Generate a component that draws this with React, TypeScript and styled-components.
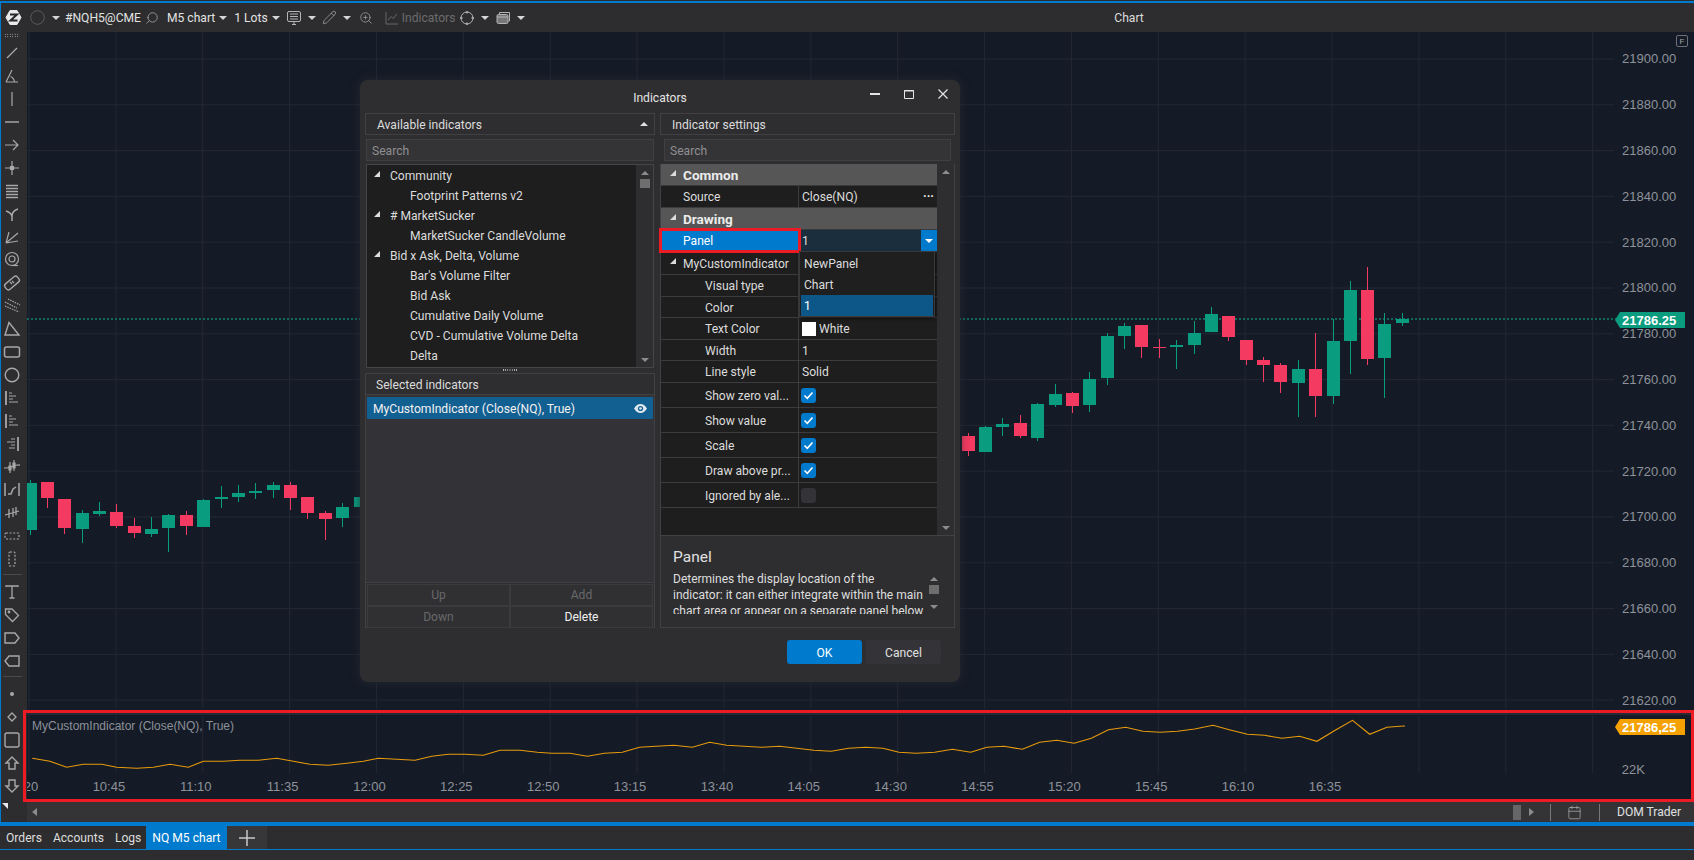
import React from 'react';
import styled, { createGlobalStyle } from 'styled-components';
import { Search, Pencil, ZoomIn, Calendar } from 'lucide-react';

const UI_FONT = 'Roboto, "Open Sans", sans-serif';
const CHART_FONT = '"Liberation Sans", Arial, sans-serif';
const UI_SIZE = '12.1px';

const GlobalStyle = createGlobalStyle`
  html, body { margin: 0; padding: 0; background: #2d2d2f; }
  body { width: 1694px; height: 860px; overflow: hidden; font-family: ${UI_FONT}; }
  * { box-sizing: border-box; }
`;

const Page = styled.div`
  display: flex;
  flex-direction: column;
  width: 1694px;
  height: 860px;
  background: #2d2d2f;
  color: #dcdcdc;
  font-size: ${UI_SIZE};
`;

const Frame = styled.div`
  display: flex;
  flex-direction: column;
  height: 825px;
  margin-top: 1px;
  border-top: 2px solid #007acc;
  border-bottom: 4px solid #007acc;
  border-left: 1px solid #007acc;
`;

/* top toolbar */
const Toolbar = styled.div`
  display: flex;
  align-items: center;
  flex: none;
  height: 29px;
  padding-left: 4px;
`;

const ToolGroup = styled.div`
  display: flex;
  align-items: center;
  width: 559px;
  flex: none;
`;

const ToolText = styled.span<{ $dim?: boolean; $ml?: number }>`
  font-size: ${UI_SIZE};
  white-space: nowrap;
  margin-left: ${p => p.$ml ?? 6}px;
  color: ${p => (p.$dim ? '#6b6b6d' : '#e2e2e2')};
`;

const ToolIcon = styled.span<{ $ml?: number }>`
  display: inline-flex;
  flex: none;
  margin-left: ${p => p.$ml ?? 6}px;
  color: #b5b5b5;
`;

const Caret = styled.span<{ $ml?: number }>`
  flex: none;
  width: 0;
  height: 0;
  margin-left: ${p => p.$ml ?? 7}px;
  border-left: 4px solid transparent;
  border-right: 4px solid transparent;
  border-top: 4px solid #d5d5d5;
`;

const WindowTitle = styled.div`
  flex: 1;
  text-align: center;
  font-size: ${UI_SIZE};
  color: #dcdcdc;
`;

/* work area */
const Body = styled.div`
  display: flex;
  flex: 1;
  min-height: 0;
`;

const SideTools = styled.div`
  position: relative;
  display: flex;
  flex-direction: column;
  align-items: center;
  flex: none;
  width: 26px;
  padding-right: 4px;
  color: #a8a8a8;
`;

const Grip = styled.div`
  width: 16px;
  height: 5px;
  margin: 1px 0 3px;
  background-image: radial-gradient(circle, #cfcfcf 0.6px, transparent 0.8px);
  background-size: 2.5px 2.5px;
`;

const ToolRow = styled.div`
  display: flex;
  align-items: center;
  justify-content: center;
  flex: none;
  height: 23px;
`;

const ToolSep = styled.div`
  flex: none;
  width: 19px;
  height: 1px;
  margin: 4px 0 5px;
  background: #4a4a4c;
`;

const CornerMark = styled.div`
  position: absolute;
  left: 1px;
  bottom: 13px;
  width: 0;
  height: 0;
  border-top: 6px solid #e8e8e8;
  border-left: 6px solid transparent;
`;

const Main = styled.div`
  display: flex;
  flex-direction: column;
  flex: 1;
  min-width: 0;
`;

const ChartArea = styled.div`
  position: relative;
  display: flex;
  flex: 1;
  min-height: 0;
  background: #151b26;
`;

const PriceAxis = styled.div`
  flex: none;
  width: 76px;
  padding: 4px 0 0 4px;
  font-family: ${CHART_FONT};
  font-size: 13px;
  color: #8e929a;
`;

const PriceLabel = styled.div`
  display: flex;
  align-items: center;
  height: 45.8px;
`;

const FloatBox = styled.div`
  position: absolute;
  top: 3px;
  right: 6px;
  display: flex;
  align-items: center;
  justify-content: center;
  width: 12px;
  height: 12px;
  border: 1px solid #6d7078;
  border-radius: 2px;
  font-family: ${CHART_FONT};
  font-size: 8px;
  color: #a4a7ad;
`;

const PriceTag = styled.div<{ $color: string; $top: number }>`
  position: absolute;
  top: ${p => p.$top}px;
  right: 9px;
  display: flex;
  align-items: center;
  width: 65px;
  height: 16px;
  padding-left: 2px;
  font-family: ${CHART_FONT};
  font-size: 13px;
  font-weight: 700;
  color: #ffffff;
  background: ${p => p.$color};
  &::before {
    content: '';
    position: absolute;
    left: -5px;
    top: 0;
    border-top: 8px solid transparent;
    border-bottom: 8px solid transparent;
    border-right: 5px solid ${p => p.$color};
  }
`;

const IndicatorPanel = styled.div`
  position: relative;
  display: flex;
  flex-direction: column;
  flex: none;
  height: 92px;
  padding-top: 3px;
  background: #151b26;
  &::after {
    content: '';
    position: absolute;
    inset: 0 0 0 -4px;
    border: 3px solid #ed1c24;
    pointer-events: none;
  }
`;

const PanelPlot = styled.div`
  position: relative;
  display: flex;
  flex: none;
  height: 60px;
`;

const Legend = styled.div`
  position: absolute;
  left: 5px;
  top: 6px;
  font-family: ${CHART_FONT};
  font-size: 12px;
  color: #8b9099;
`;

const PanelScale = styled.div`
  position: absolute;
  right: 49px;
  top: 49px;
  font-family: ${CHART_FONT};
  font-size: 13px;
  color: #8e929a;
`;

const TimeAxis = styled.div`
  display: flex;
  flex: 1;
  overflow: hidden;
  align-items: center;
  font-family: ${CHART_FONT};
  font-size: 13px;
  color: #8e929a;
  border-bottom: 2px solid #2b2e35;
`;

const TimeLabel = styled.div`
  flex: none;
  width: 86.87px;
  text-align: center;
  &:first-child { margin-left: -48.4px; }
`;

const HScroll = styled.div`
  display: flex;
  align-items: center;
  flex: none;
  height: 20px;
  background: #343437;
  color: #b5b5b5;
`;

const ScrollThumb = styled.div`
  flex: none;
  width: 8px;
  height: 15px;
  margin-left: 1475px;
  background: #666668;
`;

const HSep = styled.div`
  flex: none;
  width: 1px;
  height: 17px;
  background: #77777a;
`;

const DomTrader = styled.div`
  flex: none;
  width: 96px;
  padding-left: 17px;
  font-size: ${UI_SIZE};
  color: #e0e0e0;
  white-space: nowrap;
`;

/* tab strip */
const TabBar = styled.div`
  display: flex;
  align-items: stretch;
  flex: none;
  height: 24px;
  border-bottom: 1px solid #007acc;
  padding-left: 6px;
`;

const Tab = styled.div<{ $active?: boolean; $gap?: number }>`
  display: flex;
  align-items: center;
  font-size: ${UI_SIZE};
  padding: ${p => (p.$active ? '0 6px' : `0 ${p.$gap ?? 11}px 0 0`)};
  color: ${p => (p.$active ? '#ffffff' : '#dddddd')};
  background: ${p => (p.$active ? '#007acc' : 'transparent')};
  white-space: nowrap;
`;

const AddTab = styled.div`
  display: flex;
  align-items: center;
  justify-content: center;
  width: 40px;
  background: #37373a;
  color: #c8c8c8;
`;

/* dialog */
const Dialog = styled.div`
  position: absolute;
  left: 360px;
  top: 80px;
  display: flex;
  flex-direction: column;
  width: 600px;
  height: 602px;
  padding: 0 5px;
  background: #2e2e30;
  border-radius: 8px;
  box-shadow: 0 0 10px rgba(40, 44, 54, 0.75);
`;

const DialogHead = styled.div`
  position: relative;
  display: flex;
  align-items: center;
  justify-content: center;
  flex: none;
  height: 33px;
  padding-top: 3px;
  font-size: ${UI_SIZE};
  color: #e4e4e4;
`;

const WinButtons = styled.div`
  position: absolute;
  right: 7px;
  top: 9px;
  display: flex;
  gap: 24px;
  color: #e4e4e4;
`;

const DialogColumns = styled.div`
  display: grid;
  grid-template-columns: 290px 295px;
  gap: 5px;
  flex: none;
  height: 515px;
`;

const Column = styled.div`
  display: flex;
  flex-direction: column;
  min-height: 0;
`;

const SectionHead = styled.div<{ $pad: number }>`
  position: relative;
  display: flex;
  align-items: center;
  flex: none;
  height: 22px;
  padding: 1px 0 0 ${p => p.$pad}px;
  border: 1px solid #414144;
  font-size: ${UI_SIZE};
  color: #dcdcdc;
`;

const HeadArrow = styled.span`
  position: absolute;
  right: 6px;
  top: 8px;
  border-left: 4px solid transparent;
  border-right: 4px solid transparent;
  border-bottom: 4px solid #e0e0e0;
`;

const SearchBox = styled.div<{ $inset: number }>`
  display: flex;
  align-items: center;
  flex: none;
  height: 22px;
  margin: 4px ${p => p.$inset}px 3px;
  padding: 1px 0 0 5px;
  background: #343437;
  border: 1px solid #404043;
  font-size: ${UI_SIZE};
  color: #8f8f91;
`;

const TreeBox = styled.div`
  display: flex;
  flex: none;
  height: 204px;
  margin: 0 1px;
  border: 1px solid #454548;
  background: #1e1e1e;
`;

const TreeRows = styled.div`
  flex: 1;
  overflow: hidden;
`;

const TreeRow = styled.div<{ $child?: boolean }>`
  position: relative;
  display: flex;
  align-items: center;
  height: 20px;
  padding: 1px 0 0 ${p => (p.$child ? 43 : 23)}px;
  font-size: ${UI_SIZE};
  color: #dcdcdc;
  white-space: nowrap;
`;

const Expander = styled.span<{ $left: number }>`
  position: absolute;
  left: ${p => p.$left}px;
  top: 6px;
  width: 0;
  height: 0;
  border-bottom: 6px solid #dcdcdc;
  border-left: 6px solid transparent;
`;

const VScroll = styled.div<{ $width: number }>`
  display: flex;
  flex-direction: column;
  align-items: center;
  flex: none;
  width: ${p => p.$width}px;
  padding: 6px 0 5px;
  background: #2e2e30;
`;

const ArrowUp = styled.span`
  flex: none;
  width: 0;
  height: 0;
  border-left: 4px solid transparent;
  border-right: 4px solid transparent;
  border-bottom: 4px solid #8c8c8c;
`;

const ArrowDown = styled.span`
  flex: none;
  width: 0;
  height: 0;
  margin-top: auto;
  border-left: 4px solid transparent;
  border-right: 4px solid transparent;
  border-top: 4px solid #8c8c8c;
`;

const Thumb = styled.span`
  flex: none;
  width: 10px;
  height: 9px;
  margin-top: 4px;
  background: #6e6e6e;
`;

const SplitGrip = styled.div`
  flex: none;
  height: 5px;
  background-image: radial-gradient(circle, #bdbdbd 0.6px, transparent 0.7px);
  background-size: 2.2px 2.2px;
  background-repeat: repeat-x;
  background-position: center;
  margin: 0 138px;
`;

const SelectedBody = styled.div`
  display: flex;
  flex-direction: column;
  flex: 1;
  min-height: 0;
  padding: 2px 1px 0;
  background: #333337;
  border-left: 1px solid #414144;
  border-right: 1px solid #414144;
`;

const SelectedRow = styled.div`
  display: flex;
  align-items: center;
  justify-content: space-between;
  height: 22px;
  padding: 1px 6px 0;
  background: #125f91;
  color: #f2f2f2;
  font-size: ${UI_SIZE};
  white-space: nowrap;
`;

const ActionGrid = styled.div`
  display: grid;
  grid-template-columns: 1fr 1fr;
  grid-auto-rows: 22px;
  flex: none;
  height: 46px;
  padding: 1px;
  border: 1px solid #414144;
`;

const ActionButton = styled.div<{ $enabled?: boolean }>`
  display: flex;
  align-items: center;
  justify-content: center;
  font-size: ${UI_SIZE};
  color: ${p => (p.$enabled ? '#f0f0f0' : '#68686a')};
  background: #303033;
  border: 1px solid #3b3b3e;
`;

const PropsBox = styled.div`
  display: flex;
  flex: none;
  height: 371px;
  border-left: 1px solid #414144;
  border-right: 1px solid #414144;
`;

const PropsTable = styled.div`
  flex: 1;
  display: flex;
  flex-direction: column;
  background: #1e1e1e;
`;

const CategoryRow = styled.div`
  position: relative;
  display: flex;
  align-items: center;
  flex: none;
  height: 22px;
  padding-left: 22px;
  background: #565656;
  border-bottom: 1px solid #3a3a3c;
  font-size: 13.6px;
  font-weight: 700;
  color: #ececec;
`;

const PropRow = styled.div<{ $h: number }>`
  display: grid;
  grid-template-columns: 138px 1fr;
  flex: none;
  height: ${p => p.$h}px;
  border-bottom: 1px solid #3c3c3f;
`;

const PropName = styled.div<{ $indent: number; $selected?: boolean }>`
  position: relative;
  display: flex;
  align-items: center;
  padding: ${p => (p.$selected ? 0 : 1)}px 0 0 ${p => p.$indent}px;
  border-right: 1px solid #3c3c3f;
  color: ${p => (p.$selected ? '#ffffff' : '#dcdcdc')};
  background: ${p => (p.$selected ? '#007acc' : 'transparent')};
  font-size: ${UI_SIZE};
  white-space: nowrap;
  overflow: ${p => (p.$selected ? 'visible' : 'hidden')};
  ${p => p.$selected && 'outline: 3px solid #ed1c24; outline-offset: -1px; z-index: 2;'}
`;

const PropValue = styled.div<{ $active?: boolean }>`
  position: relative;
  display: flex;
  align-items: center;
  justify-content: space-between;
  padding: ${p => (p.$active ? 0 : 1)}px 0 0 3px;
  font-size: ${UI_SIZE};
  color: #dcdcdc;
  background: ${p => (p.$active ? '#1b2e3d' : 'transparent')};
`;

const CheckCell = styled.div`
  display: flex;
  align-items: center;
  padding-left: 2px;
`;

const Dots = styled.span`
  margin-right: 3px;
  color: #f0f0f0;
  font-weight: 700;
  letter-spacing: 0;
`;

const DropButton = styled.div`
  display: flex;
  align-items: center;
  justify-content: center;
  align-self: stretch;
  width: 16px;
  background: #007acc;
  &::after {
    content: '';
    border-left: 4px solid transparent;
    border-right: 4px solid transparent;
    border-top: 4px solid #ffffff;
  }
`;

const Popup = styled.div`
  position: absolute;
  left: 0;
  top: 100%;
  width: 136px;
  height: 66px;
  padding: 1px;
  background: #1f1f1f;
  border: 1px solid #3a3a3c;
  box-shadow: 1px 2px 3px rgba(0, 0, 0, 0.5);
  z-index: 3;
`;

const PopupRow = styled.div<{ $selected?: boolean }>`
  display: flex;
  align-items: center;
  height: 21px;
  padding-left: 3px;
  font-size: ${UI_SIZE};
  background: ${p => (p.$selected ? '#0c5788' : 'transparent')};
  color: ${p => (p.$selected ? '#ffffff' : '#dcdcdc')};
`;

const CheckBox = styled.span<{ $on?: boolean }>`
  display: flex;
  align-items: center;
  justify-content: center;
  width: 15px;
  height: 15px;
  border-radius: 3px;
  background: ${p => (p.$on ? '#007acc' : '#333338')};
`;

const Swatch = styled.span`
  display: inline-block;
  flex: none;
  width: 14px;
  height: 14px;
  margin-right: 3px;
  background: #ffffff;
`;

const SwatchCell = styled.span`
  display: flex;
  align-items: center;
`;

const Description = styled.div`
  display: flex;
  flex-direction: column;
  flex: 1;
  min-height: 0;
  padding: 12px 12px 13px 12px;
  border: 1px solid #414144;
`;

const DescTitle = styled.div`
  flex: none;
  height: 23px;
  font-size: 15.5px;
  color: #e0e0e0;
`;

const DescBody = styled.div`
  display: flex;
  flex: 1;
  min-height: 0;
`;

const DescText = styled.div`
  flex: 1;
  overflow: hidden;
  font-size: 12px;
  line-height: 16px;
  color: #dedede;
`;

const DialogFooter = styled.div`
  display: flex;
  justify-content: flex-end;
  gap: 4px;
  flex: none;
  padding: 12px 14px 0 0;
`;

const FootButton = styled.div<{ $primary?: boolean }>`
  display: flex;
  align-items: center;
  justify-content: center;
  width: 75px;
  height: 24px;
  padding-top: 1px;
  border-radius: 3px;
  font-size: ${UI_SIZE};
  color: ${p => (p.$primary ? '#ffffff' : '#e0e0e0')};
  background: ${p => (p.$primary ? '#007acc' : '#343438')};
`;

/* chart data, read off the screenshot at 3x */
type Candle = [number, number, number, number, number, 'u' | 'd'];

const leftCandles: Candle[] = [
  [91, 69, 210, 60, 224, 'u'], [142, 66, 114, 66, 144, 'd'], [193, 117, 204, 117, 221, 'd'],
  [247, 159, 207, 150, 249, 'u'], [298, 153, 162, 126, 168, 'u'], [349, 156, 198, 132, 204, 'd'],
  [403, 198, 219, 174, 234, 'd'], [454, 207, 222, 171, 231, 'u'], [505, 165, 204, 162, 276, 'u'],
  [559, 165, 198, 153, 225, 'd'], [610, 120, 201, 117, 201, 'u'], [664, 111, 117, 78, 144, 'u'],
  [715, 99, 111, 75, 126, 'u'], [766, 93, 99, 69, 117, 'u'], [820, 75, 90, 66, 114, 'u'],
  [871, 75, 114, 66, 150, 'd'], [922, 111, 159, 111, 177, 'd'], [976, 159, 177, 153, 240, 'd'],
  [1027, 141, 174, 129, 201, 'u'], [1081, 111, 141, 105, 150, 'u'],
];

const rightCandles: Candle[] = [
  [25, 588, 633, 579, 648, 'd'], [77, 561, 636, 558, 636, 'u'], [127, 552, 561, 534, 587, 'u'],
  [181, 549, 588, 525, 594, 'd'], [232, 492, 594, 489, 603, 'u'], [286, 462, 495, 432, 501, 'u'],
  [337, 459, 498, 456, 519, 'd'], [388, 417, 495, 396, 516, 'u'], [442, 288, 414, 279, 435, 'u'],
  [493, 258, 288, 249, 327, 'u'], [544, 255, 321, 255, 354, 'd'], [598, 321, 324, 297, 354, 'd'],
  [649, 315, 321, 300, 387, 'u'], [703, 279, 315, 243, 342, 'u'], [754, 222, 276, 201, 276, 'u'],
  [805, 228, 291, 228, 303, 'd'], [859, 300, 360, 300, 375, 'd'], [910, 360, 375, 351, 426, 'd'],
  [961, 375, 426, 369, 459, 'd'], [1015, 387, 429, 360, 531, 'u'], [1066, 387, 468, 279, 531, 'd'],
  [1120, 303, 468, 237, 492, 'u'], [1171, 150, 303, 123, 402, 'u'], [1222, 150, 357, 81, 375, 'd'],
  [1273, 252, 354, 219, 474, 'u'], [1327, 237, 249, 219, 258, 'u'],
];

const indicatorLeft = [
  [97, 172], [150, 181], [200, 199], [250, 190], [305, 190], [350, 199], [410, 202], [460, 199],
  [510, 190], [565, 199], [610, 181], [670, 181], [720, 178], [775, 178], [830, 172], [880, 181],
  [930, 190], [985, 193], [1040, 187], [1090, 181], [1135, 172], [1190, 175], [1245, 178],
  [1295, 166], [1345, 160], [1395, 160], [1450, 163],
];

const indicatorRight = [
  [0, 148], [35, 148], [65, 154], [90, 157], [122, 157], [152, 166], [182, 157], [213, 154],
  [243, 139], [272, 136], [303, 133], [335, 139], [365, 124], [395, 133], [425, 136], [455, 139],
  [487, 136], [517, 142], [547, 148], [577, 151], [607, 142], [637, 139], [667, 142], [695, 154],
  [725, 157], [757, 154], [788, 145], [820, 154], [848, 139], [878, 136], [910, 145], [940, 124],
  [970, 118], [1000, 127], [1030, 112], [1060, 86], [1090, 79], [1120, 91], [1150, 94], [1180, 91],
  [1210, 84], [1242, 73], [1272, 87], [1302, 100], [1332, 103], [1362, 112], [1393, 106], [1423, 121],
  [1455, 88], [1485, 58], [1515, 100], [1545, 79], [1568, 76],
];

const indicatorPoints = [
  ...indicatorLeft.map(([x, y]) => `${(x / 3).toFixed(1)},${(700 + y / 3).toFixed(1)}`),
  ...indicatorRight.map(([x, y]) => `${(500 + x / 1.742).toFixed(1)},${(700 + y / 3).toFixed(1)}`),
  '1405,725',
].join(' ');

const gridX = Array.from({ length: 19 }, (_, i) => 29 + i * 86.87);
const gridY = Array.from({ length: 15 }, (_, i) => 59 + i * 45.8);
const prices = gridY.map((_, i) => (21900 - i * 20).toFixed(2));
const times = ['10:20', '10:45', '11:10', '11:35', '12:00', '12:25', '12:50', '13:15', '13:40', '14:05', '14:30', '14:55', '15:20', '15:45', '16:10', '16:35'];

const CandleMark = ({ c, ox, oy }: { c: Candle; ox: number; oy: number }) => {
  const [cx, top, bottom, wickTop, wickBottom, dir] = c;
  const x = ox + cx / 3;
  const fill = dir === 'u' ? '#0a9c7f' : '#f43a60';
  return (
    <g fill={fill} shapeRendering="crispEdges">
      <rect x={x - 0.5} y={oy + wickTop / 3} width={1} height={(wickBottom - wickTop) / 3} />
      <rect x={x - 6.5} y={oy + top / 3} width={13} height={Math.max((bottom - top) / 3, 1)} />
    </g>
  );
};

const PriceChart = () => (
  <svg width={1591} height={677} viewBox="27 32 1591 677" style={{ flex: 'none', display: 'block' }}>
    {gridX.map(x => <line key={x} x1={x} x2={x} y1={32} y2={709} stroke="#222834" />)}
    {gridY.map(y => <line key={y} x1={27} x2={1614} y1={y} y2={y} stroke="#222834" />)}
    <line x1={27} x2={1618} y1={319} y2={319} stroke="#11685f" strokeWidth={2} strokeDasharray="2 2" />
    {leftCandles.map(c => <CandleMark key={c[0]} c={c} ox={0} oy={460} />)}
    {rightCandles.map(c => <CandleMark key={c[0]} c={c} ox={960} oy={240} />)}
  </svg>
);

const IndicatorChart = () => (
  <svg width={1667} height={60} viewBox="27 712 1667 60" style={{ flex: 'none', display: 'block' }}>
    <line x1={27} x2={1694} y1={713} y2={713} stroke="#363b47" />
    {gridX.map(x => <line key={x} x1={x} x2={x} y1={713} y2={772} stroke="#222834" />)}
    <polyline points={indicatorPoints} fill="none" stroke="#e79a0c" strokeWidth={1.1} />
  </svg>
);

/* icons */
const Ico = ({ children, size = 20 }: { children: React.ReactNode; size?: number }) => (
  <svg width={size} height={size} viewBox="0 0 20 20" fill="none" stroke="currentColor" strokeWidth={1.2}>
    {children}
  </svg>
);

const fibBars = (
  <>
    <path d="M4 3V17" strokeWidth={1.8} />
    <path d="M7 5H10M7 8H14M7 11H11M7 14H16" />
  </>
);

const sideIcons: React.ReactNode[] = [
  <path d="M5 15 15 5" />,
  <path d="M4 16H16M4 16 10 4M8.5 10.5Q12 12 12.5 16" />,
  <path d="M10 3V17" strokeWidth={2} stroke="#777779" />,
  <path d="M3 10H17" strokeWidth={2} stroke="#858587" />,
  <path d="M3 10H16M11 5l5 5-5 5" />,
  <path d="M10 3V17M3 10H17M8.5 8.5h3v3h-3z" fill="currentColor" />,
  <path d="M4 4.5H16M4 7.5H16M4 10.5H16M4 13.5H16M4 16.5H16" strokeWidth={1.4} />,
  <path d="M10 17V12C10 8 13 6 16 5M4 7C7 8 10 10 10 13" strokeWidth={1.5} />,
  <path d="M4 16 16 6M4 16 7 5M4 16 16 14" />,
  <>
    <circle cx={10} cy={9} r={6.5} />
    <circle cx={10} cy={9} r={3} />
    <path d="M10 15.5H16" />
  </>,
  <>
    <rect x={2} y={6.5} width={16} height={7} rx={2.5} transform="rotate(-40 10 10)" strokeWidth={1.4} />
    <path d="M8 9l2 2M10 8l2 2" />
  </>,
  <path d="M3 6 15 12M3 10 17 16M6 3 18 9" strokeDasharray="1.5 1" />,
  <path d="M7 3.5 17 16H3Z" strokeWidth={1.4} />,
  <rect x={2.5} y={5} width={15} height={10} rx={2} strokeWidth={1.5} />,
  <circle cx={10} cy={10} r={6.8} strokeWidth={1.4} />,
  fibBars,
  fibBars,
  <>
    <path d="M16 3V17" strokeWidth={1.8} />
    <path d="M13 5H9M13 8H5M13 11H9M13 14H7" />
  </>,
  <>
    <path d="M2 11H5M8 5V16M12 3V14M5 11 15 8" />
    <path d="M7 9h2v4H7zM11 6h2v5h-2z" fill="currentColor" />
    <path d="M15 8h3" />
  </>,
  <path d="M3 3V16M17 3V16M6 14 9 14 11 9 14 7" strokeWidth={1.5} />,
  <path d="M3 12 17 8M7 6V15M11 5V14M14 4V12" strokeWidth={1.3} />,
  <rect x={3} y={7} width={14} height={6} rx={1} strokeDasharray="2 1.6" />,
  <rect x={7} y={3} width={6} height={14} rx={1} strokeDasharray="2 1.6" />,
];

const sideIconsB: React.ReactNode[] = [
  <path d="M4 5V4H16V5M10 4V16M7.5 16H12.5" strokeWidth={1.3} />,
  <>
    <path d="M3.5 4H10L16.5 10.5 10.5 16.5 3.5 9.5Z" strokeWidth={1.3} />
    <circle cx={7} cy={7} r={0.8} />
  </>,
  <path d="M3 5H13L17 10 13 15H3Z" strokeWidth={1.4} />,
  <path d="M7 5H17V15H7L3 10Z" strokeWidth={1.4} />,
];

const sideIconsC: React.ReactNode[] = [
  <circle cx={10} cy={10} r={2} fill="currentColor" stroke="none" />,
  <path d="M10 6 14 10 10 14 6 10Z" strokeWidth={1.3} />,
  <rect x={3} y={3} width={14} height={14} rx={2} strokeWidth={1.4} />,
  <path d="M10 4 16 10H13V16H7V10H4Z" strokeWidth={1.4} />,
  <path d="M10 16 16 10H13V4H7V10H4Z" strokeWidth={1.4} />,
];

const LogoMark = () => (
  <svg width={17} height={17} viewBox="0 0 17 17">
    <path d="M5 1.5H12L16 8.5 12 15.5H5L1 8.5Z" fill="#e9e9e9" stroke="#e9e9e9" strokeLinejoin="round" />
    <path d="M5 5.5H12L5.5 11.5H12.5" fill="none" stroke="#26262a" strokeWidth={2} />
  </svg>
);

const MonitorIcon = () => (
  <svg width={16} height={16} viewBox="0 0 16 16" fill="none" stroke="currentColor">
    <rect x={1.5} y={1.5} width={13} height={10} rx={1.5} />
    <path d="M4 4H12M4 6.5H12M4 9H12M8 12V14.5M6 14.5H10" />
  </svg>
);

const ChartIcon = () => (
  <svg width={14} height={14} viewBox="0 0 14 14" fill="none" stroke="#66666a">
    <path d="M1 1V13H13M3 9 6 5.5 8 7.5 12 3" />
  </svg>
);

const CrosshairIcon = () => (
  <svg width={14} height={14} viewBox="0 0 14 14" fill="none" stroke="currentColor">
    <circle cx={7} cy={7} r={6} />
    <path d="M7 0V2.5M7 11.5V14M0 7H2.5M11.5 7H14" strokeWidth={1.4} />
  </svg>
);

const WindowsIcon = () => (
  <svg width={15} height={14} viewBox="0 0 15 14" fill="none" stroke="currentColor">
    <rect x={1} y={3.5} width={11} height={9} rx={1.5} fill="#77777a" />
    <path d="M3.5 3V1.5H13.5V10H12.5" />
    <path d="M1 6H12" />
  </svg>
);

const CheckMark = () => (
  <svg width={11} height={11} viewBox="0 0 11 11" fill="none" stroke="#ffffff" strokeWidth={1.6}>
    <path d="M1.5 5.5 4.3 8.3 9.5 2.5" />
  </svg>
);

const CircleIcon = () => (
  <svg width={15} height={15} viewBox="0 0 15 15" fill="none" stroke="#5c5c5e">
    <circle cx={7.5} cy={7.5} r={6.8} />
  </svg>
);

const EyeMark = () => (
  <svg width={13} height={9} viewBox="0 0 13 9">
    <path d="M0 4.5C2 1.3 4 0 6.5 0S11 1.3 13 4.5C11 7.7 9 9 6.5 9S2 7.7 0 4.5Z" fill="#dfe8ee" />
    <circle cx={6.5} cy={4.5} r={2.6} fill="#125f91" />
    <circle cx={6.5} cy={4.5} r={1.3} fill="#dfe8ee" />
  </svg>
);

const App = () => (
  <Page>
    <GlobalStyle />
    <Frame>
      <Toolbar>
        <ToolGroup>
          <LogoMark />
          <ToolIcon $ml={8}><CircleIcon /></ToolIcon>
          <Caret $ml={7} />
          <ToolText $ml={5}>#NQH5@CME</ToolText>
          <ToolIcon $ml={4}><Search size={14} strokeWidth={1.2} style={{ transform: 'scaleX(-1)' }} /></ToolIcon>
          <ToolText $ml={8}>M5 chart</ToolText>
          <Caret $ml={4} />
          <ToolText $ml={7}>1 Lots</ToolText>
          <Caret $ml={4} />
          <ToolIcon $ml={6}><MonitorIcon /></ToolIcon>
          <Caret $ml={6} />
          <ToolIcon $ml={6}><Pencil size={15} strokeWidth={1.1} /></ToolIcon>
          <Caret $ml={6} />
          <ToolIcon $ml={8}><ZoomIn size={14} strokeWidth={1.1} /></ToolIcon>
          <ToolIcon $ml={12}><ChartIcon /></ToolIcon>
          <ToolText $dim $ml={3}>Indicators</ToolText>
          <ToolIcon $ml={5}><CrosshairIcon /></ToolIcon>
          <Caret $ml={7} />
          <ToolIcon $ml={7}><WindowsIcon /></ToolIcon>
          <Caret $ml={6} />
        </ToolGroup>
        <WindowTitle>Chart</WindowTitle>
      </Toolbar>
      <Body>
        <SideTools>
          <Grip />
          {sideIcons.map((icon, i) => <ToolRow key={i}><Ico>{icon}</Ico></ToolRow>)}
          <ToolSep />
          {sideIconsB.map((icon, i) => <ToolRow key={i}><Ico>{icon}</Ico></ToolRow>)}
          <ToolSep />
          {sideIconsC.map((icon, i) => <ToolRow key={i}><Ico>{icon}</Ico></ToolRow>)}
          <CornerMark />
        </SideTools>
        <Main>
          <ChartArea>
            <PriceChart />
            <PriceAxis>
              {prices.map(p => <PriceLabel key={p}>{p}</PriceLabel>)}
            </PriceAxis>
            <FloatBox>F</FloatBox>
            <PriceTag $color="#0a9c7f" $top={280}>21786.25</PriceTag>
          </ChartArea>
          <IndicatorPanel>
            <PanelPlot>
              <IndicatorChart />
              <Legend>MyCustomIndicator (Close(NQ), True)</Legend>
              <PanelScale>22K</PanelScale>
              <PriceTag $color="#f5a100" $top={6}>21786,25</PriceTag>
            </PanelPlot>
            <TimeAxis>
              {times.map(t => <TimeLabel key={t}>{t}</TimeLabel>)}
            </TimeAxis>
          </IndicatorPanel>
          <HScroll>
            <ToolIcon $ml={5}><svg width={6} height={8} viewBox="0 0 6 8"><path d="M5 0V8L0 4Z" fill="#8c8c8c" /></svg></ToolIcon>
            <ScrollThumb />
            <ToolIcon $ml={7}><svg width={6} height={8} viewBox="0 0 6 8"><path d="M1 0V8L6 4Z" fill="#8c8c8c" /></svg></ToolIcon>
            <ToolIcon $ml={16}><HSep /></ToolIcon>
            <ToolIcon $ml={16}><Calendar size={15} strokeWidth={1.1} /></ToolIcon>
            <ToolIcon $ml={17}><HSep /></ToolIcon>
            <DomTrader>DOM Trader</DomTrader>
          </HScroll>
        </Main>
      </Body>
    </Frame>
    <TabBar>
      <Tab>Orders</Tab>
      <Tab>Accounts</Tab>
      <Tab $gap={5}>Logs</Tab>
      <Tab $active>NQ M5 chart</Tab>
      <AddTab>
        <svg width={16} height={16} viewBox="0 0 16 16" stroke="currentColor" strokeWidth={1.5}><path d="M8 0V16M0 8H16" /></svg>
      </AddTab>
    </TabBar>

    <Dialog>
      <DialogHead>
        Indicators
        <WinButtons>
          <svg width={10} height={10} viewBox="0 0 10 10" stroke="currentColor" strokeWidth={2}><path d="M0 5H10" /></svg>
          <svg width={10} height={10} viewBox="0 0 10 10" fill="none" stroke="currentColor"><path d="M.5 1.5H9.5V9.5H.5Z M0 2H10" /></svg>
          <svg width={10} height={10} viewBox="0 0 10 10" stroke="currentColor" strokeWidth={1.2}><path d="M.5 .5 9.5 9.5M9.5 .5 .5 9.5" /></svg>
        </WinButtons>
      </DialogHead>
      <DialogColumns>
        <Column>
          <SectionHead $pad={11}>
            Available indicators
            <HeadArrow />
          </SectionHead>
          <SearchBox $inset={1}>Search</SearchBox>
          <TreeBox>
            <TreeRows>
              <TreeRow><Expander $left={7} />Community</TreeRow>
              <TreeRow $child>Footprint Patterns v2</TreeRow>
              <TreeRow><Expander $left={7} /># MarketSucker</TreeRow>
              <TreeRow $child>MarketSucker CandleVolume</TreeRow>
              <TreeRow><Expander $left={7} />Bid x Ask, Delta, Volume</TreeRow>
              <TreeRow $child>Bar's Volume Filter</TreeRow>
              <TreeRow $child>Bid Ask</TreeRow>
              <TreeRow $child>Cumulative Daily Volume</TreeRow>
              <TreeRow $child>CVD - Cumulative Volume Delta</TreeRow>
              <TreeRow $child>Delta</TreeRow>
            </TreeRows>
            <VScroll $width={17}><ArrowUp /><Thumb /><ArrowDown /></VScroll>
          </TreeBox>
          <SplitGrip />
          <SectionHead $pad={10}>Selected indicators</SectionHead>
          <SelectedBody>
            <SelectedRow>
              MyCustomIndicator (Close(NQ), True)
              <EyeMark />
            </SelectedRow>
          </SelectedBody>
          <ActionGrid>
            <ActionButton>Up</ActionButton>
            <ActionButton>Add</ActionButton>
            <ActionButton>Down</ActionButton>
            <ActionButton $enabled>Delete</ActionButton>
          </ActionGrid>
        </Column>
        <Column>
          <SectionHead $pad={11}>Indicator settings</SectionHead>
          <SearchBox $inset={4}>Search</SearchBox>
          <PropsBox>
            <PropsTable>
              <CategoryRow><Expander $left={9} />Common</CategoryRow>
              <PropRow $h={22}>
                <PropName $indent={22}>Source</PropName>
                <PropValue>Close(NQ)<Dots>···</Dots></PropValue>
              </PropRow>
              <CategoryRow><Expander $left={9} />Drawing</CategoryRow>
              <PropRow $h={22}>
                <PropName $indent={22} $selected>Panel</PropName>
                <PropValue $active>
                  1
                  <DropButton />
                  <Popup>
                    <PopupRow>NewPanel</PopupRow>
                    <PopupRow>Chart</PopupRow>
                    <PopupRow $selected>1</PopupRow>
                  </Popup>
                </PropValue>
              </PropRow>
              <PropRow $h={23}>
                <PropName $indent={22}><Expander $left={9} />MyCustomIndicator</PropName>
                <PropValue />
              </PropRow>
              <PropRow $h={22}>
                <PropName $indent={44}>Visual type</PropName>
                <PropValue />
              </PropRow>
              <PropRow $h={21}>
                <PropName $indent={44}>Color</PropName>
                <PropValue />
              </PropRow>
              <PropRow $h={22}>
                <PropName $indent={44}>Text Color</PropName>
                <PropValue><SwatchCell><Swatch />White</SwatchCell></PropValue>
              </PropRow>
              <PropRow $h={21}>
                <PropName $indent={44}>Width</PropName>
                <PropValue>1</PropValue>
              </PropRow>
              <PropRow $h={22}>
                <PropName $indent={44}>Line style</PropName>
                <PropValue>Solid</PropValue>
              </PropRow>
              <PropRow $h={25}>
                <PropName $indent={44}>Show zero val...</PropName>
                <CheckCell><CheckBox $on><CheckMark /></CheckBox></CheckCell>
              </PropRow>
              <PropRow $h={25}>
                <PropName $indent={44}>Show value</PropName>
                <CheckCell><CheckBox $on><CheckMark /></CheckBox></CheckCell>
              </PropRow>
              <PropRow $h={25}>
                <PropName $indent={44}>Scale</PropName>
                <CheckCell><CheckBox $on><CheckMark /></CheckBox></CheckCell>
              </PropRow>
              <PropRow $h={25}>
                <PropName $indent={44}>Draw above pr...</PropName>
                <CheckCell><CheckBox $on><CheckMark /></CheckBox></CheckCell>
              </PropRow>
              <PropRow $h={25}>
                <PropName $indent={44}>Ignored by ale...</PropName>
                <CheckCell><CheckBox /></CheckCell>
              </PropRow>
            </PropsTable>
            <VScroll $width={17}><ArrowUp /><ArrowDown /></VScroll>
          </PropsBox>
          <Description>
            <DescTitle>Panel</DescTitle>
            <DescBody>
              <DescText>
                Determines the display location of the indicator: it can either integrate within the main chart area or appear on a separate panel below
              </DescText>
              <VScroll $width={17}><ArrowUp /><Thumb /><ArrowDown /></VScroll>
            </DescBody>
          </Description>
        </Column>
      </DialogColumns>
      <DialogFooter>
        <FootButton $primary>OK</FootButton>
        <FootButton>Cancel</FootButton>
      </DialogFooter>
    </Dialog>
  </Page>
);

export default App;
